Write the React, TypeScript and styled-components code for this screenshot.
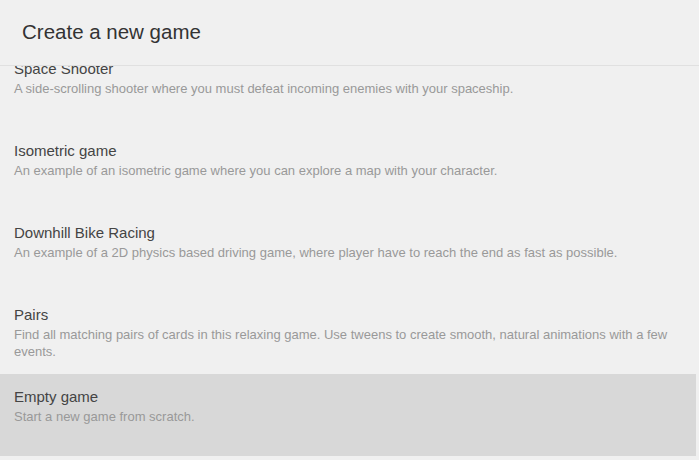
import { useLayoutEffect, useRef } from 'react';
import styled, { createGlobalStyle } from 'styled-components';

const GlobalStyle = createGlobalStyle`
  html, body {
    margin: 0;
    padding: 0;
    height: 100%;
    background-color: #f0f0f0;
    font-family: 'Liberation Sans', Arial, sans-serif;
  }
  #root {
    height: 100%;
  }
`;

const StyledDialog = styled.div`
  display: flex;
  flex-flow: column;
  height: 100%;
  background-color: #f0f0f0;
`;

const StyledHeader = styled.div`
  flex: 0 0 auto;
  height: 65px;
  display: flex;
  align-items: center;
  padding: 0 22px;
  border-bottom: solid 1px #e0e0e0;
  box-sizing: content-box;
  h1 {
    margin: 0;
    font-size: 20.5px;
    font-weight: normal;
    color: #333;
    padding-bottom: 1px;
  }
`;

const StyledList = styled.ul`
  flex: 1 1;
  list-style: none;
  margin: 0;
  padding: 0 3px 0 0;
  overflow: hidden;
`;

interface SRProps {
  isSelected: boolean;
}

const StyledRow = styled.li<SRProps>`
  height: 82px;
  box-sizing: border-box;
  padding: 14px 14px 0;
  cursor: pointer;
  background-color: ${({ isSelected }) => (isSelected ? '#d8d8d8' : 'transparent')};
  &:hover {
    background-color: #d8d8d8;
  }
`;

const StyledTitle = styled.div`
  font-size: 15px;
  line-height: 18px;
  color: #444;
`;

const StyledDescription = styled.div`
  margin-top: 2px;
  font-size: 13px;
  line-height: 17px;
  color: #999;
`;

const games = [
  {
    id: 'platformer',
    title: 'Platformer',
    description:
      'A simple platform game, with coins to collect, moving platforms and enemies.',
  },
  {
    id: 'space-shooter',
    title: 'Space Shooter',
    description:
      'A side-scrolling shooter where you must defeat incoming enemies with your spaceship.',
  },
  {
    id: 'isometric',
    title: 'Isometric game',
    description:
      'An example of an isometric game where you can explore a map with your character.',
  },
  {
    id: 'downhill',
    title: 'Downhill Bike Racing',
    description:
      'An example of a 2D physics based driving game, where player have to reach the end as fast as possible.',
  },
  {
    id: 'pairs',
    title: 'Pairs',
    description:
      'Find all matching pairs of cards in this relaxing game. Use tweens to create smooth, natural animations with a few events.',
  },
  {
    id: 'empty',
    title: 'Empty game',
    description: 'Start a new game from scratch.',
  },
];

const App = () => {
  const listRef = useRef<HTMLUListElement>(null);

  useLayoutEffect(() => {
    // the list is shown scrolled down a little, with "Platformer" out of view
    if (listRef.current) listRef.current.scrollTop = 102;
  }, []);

  return (
    <StyledDialog>
      <GlobalStyle />
      <StyledHeader>
        <h1>Create a new game</h1>
      </StyledHeader>
      <StyledList ref={listRef}>
        {games.map(game => (
          <StyledRow key={game.id} isSelected={game.id === 'empty'}>
            <StyledTitle>{game.title}</StyledTitle>
            <StyledDescription>{game.description}</StyledDescription>
          </StyledRow>
        ))}
        <StyledRow isSelected={false} />
      </StyledList>
    </StyledDialog>
  );
};

export default App;
